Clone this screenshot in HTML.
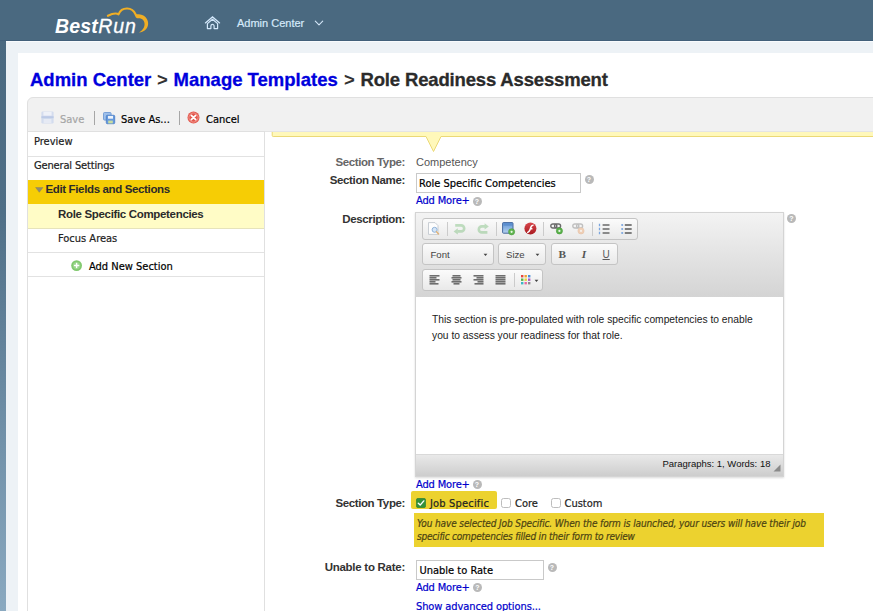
<!DOCTYPE html>
<html lang="en">
<head>
<meta charset="utf-8">
<title>Role Readiness Assessment - Manage Templates</title>
<style>
html,body{margin:0;padding:0;}
body{width:873px;height:611px;overflow:hidden;position:relative;background:#edf2f6;font-family:"Liberation Sans",Arial,sans-serif;}
.t{position:absolute;white-space:nowrap;height:20px;margin:0;padding:0;text-decoration:none;}
.abs{position:absolute;}
#header{left:0;top:0;width:873px;height:41px;background:#4a6980;box-sizing:border-box;border-bottom:1px solid #42607a;}
#hl{left:6px;top:41px;width:867px;height:1px;background:#f8fbfd;}
#leftstrip{left:0;top:41px;width:6px;height:570px;background:linear-gradient(#4a6980 0%,#4f6f87 30%,#7191a9 70%,#8aa9c0 100%);}
#page{left:18px;top:53px;width:855px;height:558px;background:#fff;}
#panel{left:27px;top:97px;width:860px;height:530px;background:#f1f1f1;border:1px solid #e0e0e0;border-radius:6px 0 0 0;box-sizing:border-box;}
#side{left:28px;top:131px;width:236px;height:480px;background:#fff;border-right:1px solid #e0e0e0;border-top:1px solid #e0e0e0;box-sizing:content-box;}
.row{position:absolute;left:0;width:236px;box-sizing:border-box;border-bottom:1px solid #e2e2e2;}
#main{left:265px;top:131px;width:608px;height:480px;background:#fff;border-top:1px solid #e4e4e4;box-sizing:border-box;}
.sep{position:absolute;width:1px;background:#a6a6a6;}
.inp{position:absolute;box-sizing:border-box;border:1px solid #c9c9c9;background:#fff;}
.help{position:absolute;width:9px;height:9px;border-radius:50%;background:#b9b9b9;color:#fff;font:700 7px/9px "Liberation Sans",sans-serif;text-align:center;}
.grp{position:absolute;box-sizing:border-box;border:1px solid #c4c4c4;border-radius:3px;background:linear-gradient(#fbfbfb,#e9e9e9);}
.cb{position:absolute;box-sizing:border-box;width:10px;height:10px;border:1px solid #bdbdbd;border-radius:2.5px;background:#fff;}
</style>
</head>
<body>

<div id="header" class="abs"></div>
<div id="leftstrip" class="abs"></div>
<div id="hl" class="abs"></div>
<span class="t" style="left:55px;top:16px;font:italic 700 19.5px/20px 'Liberation Sans', Arial, Helvetica, sans-serif;color:#fff;letter-spacing:0.15px;">Best</span>
<span class="t" style="left:98.2px;top:16px;font:italic 400 19.5px/20px 'Liberation Sans', Arial, Helvetica, sans-serif;color:#fff;letter-spacing:1.0px;-webkit-text-stroke:0.3px #fff;">Run</span>
<svg class="abs" style="left:100px;top:0px" width="56" height="40" viewBox="100 0 56 40">
<path d="M107.9 15.8 C110 14.7 113 13.5 115.6 13.5 C116.8 13.5 117.8 13.8 118.5 14.3 C120 10.6 123.5 8.4 127.2 8.5 C131 8.6 134 10.9 135.5 14.2 C135.9 15.1 136.3 16 136.7 16.7" fill="none" stroke="#f0ae24" stroke-width="2.1" stroke-linecap="round" stroke-linejoin="round"/>
<path d="M135.6 14.6 C138.6 13.6 142.8 14.3 145.4 16.9 C148.9 20.4 149 25.6 146.2 29 C144.3 31.3 141.6 32.4 138.9 32.5 C141.2 31 143 29.4 144 27.2 C145.2 24.4 144.6 21.4 142.6 19.6 C141 18.2 139 17.9 136.9 18.3 Z" fill="#f0ae24"/>
</svg>
<svg class="abs" style="left:204px;top:15px" width="17" height="16" viewBox="204 15 17 16">
<path d="M205.4 22.9 L212.5 16.9 L219.6 22.9" fill="none" stroke="#d3e8fb" stroke-width="1.25" stroke-linecap="round" stroke-linejoin="miter"/>
<path d="M207.4 23.6 L212.5 19.3 L217.6 23.6 V28.6 H214.1 V26 A1.6 1.6 0 0 0 210.9 26 V28.6 H207.4 Z" fill="none" stroke="#d3e8fb" stroke-width="1.2" stroke-linejoin="round"/>
</svg>
<span class="t" style="left:237px;top:13px;font:normal 400 11px/20px 'Liberation Sans', Arial, Helvetica, sans-serif;color:#d6e9fa;-webkit-text-stroke:0.2px #d6e9fa;">Admin Center</span>
<svg class="abs" style="left:314px;top:19px" width="10" height="8" viewBox="0 0 10 8"><path d="M1.3 2.2 L5 5.8 L8.7 2.2" fill="none" stroke="#d3e6f7" stroke-width="1.1" stroke-linecap="round" stroke-linejoin="round"/></svg>
<div id="page" class="abs"></div>
<a class="t" style="left:30px;top:70px;font:normal 700 18.5px/20px 'Liberation Sans', Arial, Helvetica, sans-serif;color:#0000dd;-webkit-text-stroke:0.3px #0000dd;">Admin Center</a>
<span class="t" style="left:157px;top:70px;font:normal 700 18.5px/20px 'Liberation Sans', Arial, Helvetica, sans-serif;color:#333;">&gt;</span>
<a class="t" style="left:173.6px;top:70px;font:normal 700 18.5px/20px 'Liberation Sans', Arial, Helvetica, sans-serif;color:#0000dd;-webkit-text-stroke:0.3px #0000dd;">Manage Templates</a>
<span class="t" style="left:344px;top:70px;font:normal 700 18.5px/20px 'Liberation Sans', Arial, Helvetica, sans-serif;color:#333;">&gt;</span>
<span class="t" style="left:360.5px;top:70px;font:normal 700 18.5px/20px 'Liberation Sans', Arial, Helvetica, sans-serif;color:#2b2b2b;letter-spacing:-0.16px;-webkit-text-stroke:0.3px #2b2b2b;">Role Readiness Assessment</span>
<div id="panel" class="abs"></div>
<svg class="abs" style="left:41px;top:111px" width="13" height="13" viewBox="0 0 13 13">
<rect x="0.4" y="0.4" width="12.2" height="12.2" rx="1.3" fill="#d3dcee"/>
<rect x="2.4" y="0.8" width="8.2" height="3.8" fill="#eef1f8"/>
<rect x="0.4" y="5.2" width="12.2" height="2" fill="#bccae6"/>
<rect x="2.6" y="8" width="7.8" height="4" fill="#e6eaf4"/>
</svg>
<span class="t" style="left:60px;top:110px;font:normal 400 11px/20px 'DejaVu Sans Condensed', 'Liberation Sans', sans-serif;color:#a6a6a6;-webkit-text-stroke:0.2px currentColor;">Save</span>
<div class="sep" style="left:94px;top:111px;height:14px"></div>
<svg class="abs" style="left:102.5px;top:111.5px" width="13" height="13" viewBox="0 0 13 13">
<rect x="0.5" y="0.5" width="7.6" height="7.6" rx="1" fill="#9fc0ea" stroke="#6f9bd6" stroke-width=".9"/>
<rect x="3.3" y="3.3" width="8.4" height="8.4" rx="1" fill="#6699dd" stroke="#4f82c8" stroke-width=".9"/>
<rect x="5" y="3.9" width="5" height="2.8" fill="#eef4fc"/>
<rect x="5.2" y="8.6" width="4.6" height="2.8" fill="#c9dca2"/>
</svg>
<span class="t" style="left:121px;top:110px;font:normal 400 11px/20px 'DejaVu Sans Condensed', 'Liberation Sans', sans-serif;color:#000;-webkit-text-stroke:0.2px currentColor;">Save As...</span>
<div class="sep" style="left:179px;top:111px;height:14px"></div>
<svg class="abs" style="left:187px;top:111px" width="13" height="13" viewBox="0 0 13 13">
<circle cx="6.5" cy="6.5" r="6" fill="#e2574d"/>
<circle cx="6.5" cy="6.5" r="4.6" fill="none" stroke="#f4a49c" stroke-width=".8"/>
<path d="M4.3 4.3 L8.7 8.7 M8.7 4.3 L4.3 8.7" stroke="#fff" stroke-width="1.7" stroke-linecap="round"/>
</svg>
<span class="t" style="left:206px;top:110px;font:normal 400 11px/20px 'DejaVu Sans Condensed', 'Liberation Sans', sans-serif;color:#000;-webkit-text-stroke:0.2px currentColor;">Cancel</span>
<div id="side" class="abs">
<div class="row" style="top:0;height:25px"></div>
<div class="row" style="top:25px;height:23px;border-bottom:none"></div>
<div class="row" style="top:48px;height:24px;background:#f6cd05;border-bottom:none"></div>
<div class="row" style="top:72px;height:25px;background:#fffcc6;border-bottom-color:#e6e3bb"></div>
<div class="row" style="top:97px;height:24px"></div>
<div class="row" style="top:121px;height:24px"></div>
</div>
<span class="t" style="left:34px;top:132px;font:normal 400 11px/20px 'DejaVu Sans Condensed', 'Liberation Sans', sans-serif;color:#222;-webkit-text-stroke:0.2px currentColor;">Preview</span>
<span class="t" style="left:34px;top:156px;font:normal 400 11px/20px 'DejaVu Sans Condensed', 'Liberation Sans', sans-serif;color:#222;letter-spacing:-0.15px;-webkit-text-stroke:0.2px currentColor;">General Settings</span>
<svg class="abs" style="left:34.5px;top:187px" width="9" height="6" viewBox="0 0 9 6"><path d="M0.6 0.4 H8 L4.3 5.3 Z" fill="#8f8b72" stroke="#7d7a66" stroke-width=".4"/></svg>
<span class="t" style="left:45.5px;top:179px;font:normal 700 11.5px/20px 'Liberation Sans', Arial, Helvetica, sans-serif;color:#2b2b2b;letter-spacing:-0.36px;">Edit Fields and Sections</span>
<span class="t" style="left:58px;top:204px;font:normal 700 11.5px/20px 'Liberation Sans', Arial, Helvetica, sans-serif;color:#2b2b2b;letter-spacing:-0.33px;">Role Specific Competencies</span>
<span class="t" style="left:58px;top:229px;font:normal 400 11px/20px 'DejaVu Sans Condensed', 'Liberation Sans', sans-serif;color:#222;-webkit-text-stroke:0.2px currentColor;">Focus Areas</span>
<svg class="abs" style="left:71px;top:260px" width="12" height="12" viewBox="0 0 12 12">
<circle cx="5.6" cy="5.6" r="5.4" fill="#80c96e"/>
<circle cx="5.6" cy="5.6" r="3.7" fill="#9bd68c"/>
<path d="M5.6 3.6 V7.6 M3.6 5.6 H7.6" stroke="#fff" stroke-width="1.5" stroke-linecap="round"/>
</svg>
<span class="t" style="left:89px;top:257px;font:normal 400 11px/20px 'DejaVu Sans Condensed', 'Liberation Sans', sans-serif;color:#000;-webkit-text-stroke:0.2px currentColor;">Add New Section</span>
<div id="main" class="abs"></div>
<svg class="abs" style="left:266px;top:132px" width="607" height="24" viewBox="0 0 607 24">
<path d="M6 -1 V3.5 Q6 4.5 7 4.5 H160 L167.5 19.5 L175 4.5 H607 V-1 Z" fill="#fff8ba"/>
<path d="M6.2 0 V3.5 Q6.2 4.5 7.2 4.5 H160 L167.5 19.5 L175 4.5 H607" fill="none" stroke="#ebd976" stroke-width="1"/>
</svg>
<span class="t" style="right:468px;top:152px;font:normal 700 11.5px/20px 'Liberation Sans', Arial, Helvetica, sans-serif;color:#666;letter-spacing:-0.38px;">Section Type:</span>
<span class="t" style="left:416px;top:152px;font:normal 400 11px/20px 'Liberation Sans', Arial, Helvetica, sans-serif;color:#555;">Competency</span>
<span class="t" style="right:468px;top:170px;font:normal 700 11.5px/20px 'Liberation Sans', Arial, Helvetica, sans-serif;color:#333;letter-spacing:-0.35px;">Section Name:</span>
<div class="inp" style="left:416px;top:173px;width:165px;height:20px"></div>
<span class="t" style="left:419px;top:174px;font:normal 400 11px/20px 'DejaVu Sans Condensed', 'Liberation Sans', sans-serif;color:#000;-webkit-text-stroke:0.2px currentColor;">Role Specific Competencies</span>
<div class="help" style="left:584.5px;top:175px">?</div>
<a class="t" style="left:416px;top:191px;font:normal 400 11px/20px 'DejaVu Sans Condensed', 'Liberation Sans', sans-serif;color:#0000cc;letter-spacing:-0.15px;-webkit-text-stroke:0.2px currentColor;">Add More+</a>
<div class="help" style="left:472.5px;top:196.5px">?</div>
<span class="t" style="right:468px;top:209px;font:normal 700 11.5px/20px 'Liberation Sans', Arial, Helvetica, sans-serif;color:#333;letter-spacing:-0.37px;">Description:</span>
<div class="abs" style="left:415px;top:212px;width:369px;height:265px;box-sizing:border-box;border:1px solid #d4d4d4;background:#fff;box-shadow:0 1px 2px rgba(0,0,0,.15)"></div>
<div class="abs" style="left:416px;top:213px;width:367px;height:84px;background:linear-gradient(#f3f3f3,#d4d4d4)"></div>
<div class="abs" style="left:416px;top:454px;width:367px;height:22px;background:linear-gradient(#e9e9e9,#cdcdcd);border-top:1px solid #d9d9d9;box-sizing:border-box"></div>
<div class="help" style="left:787px;top:214px">?</div>
<div class="grp" style="left:422px;top:218px;width:216px;height:22px"></div>
<div class="grp" style="left:422px;top:243px;width:72px;height:22px"></div>
<div class="grp" style="left:498px;top:243px;width:48px;height:22px"></div>
<div class="grp" style="left:551px;top:243px;width:67px;height:22px"></div>
<div class="grp" style="left:422px;top:269px;width:121px;height:22px"></div>
<svg class="abs" style="left:427px;top:222px" width="14" height="14" viewBox="0 0 14 14">
<path d="M1.5 0.6 H8 L11 3.6 V12.4 H1.5 Z" fill="#fdfdfd" stroke="#c3c8cf" stroke-width=".9"/>
<circle cx="7.6" cy="7.8" r="2.5" fill="#d6e6f6" stroke="#8fb2d9" stroke-width="1"/>
<path d="M9.5 9.8 L11.6 12" stroke="#e0b277" stroke-width="1.4" stroke-linecap="round"/>
</svg>
<div class="sep" style="left:446.5px;top:222px;height:14px;background:#cbcbcb"></div>
<div class="sep" style="left:495.5px;top:222px;height:14px;background:#cbcbcb"></div>
<div class="sep" style="left:543px;top:222px;height:14px;background:#cbcbcb"></div>
<div class="sep" style="left:591.5px;top:222px;height:14px;background:#cbcbcb"></div>
<svg class="abs" style="left:453px;top:223px;opacity:.34" width="14" height="12" viewBox="0 0 14 12">
<path d="M2.2 2.4 H8.2 A3 3 0 0 1 8.2 8.4 H4.4" fill="none" stroke="#57ae57" stroke-width="2.6"/><path d="M0.6 8.4 L4.8 5.2 V11.6 Z" fill="#57ae57"/></svg>
<svg class="abs" style="left:476px;top:223px;opacity:.34" width="14" height="12" viewBox="0 0 14 12">
<path d="M9 3.4 H5.8 A3 3 0 0 0 5.8 9.4 H11.4" fill="none" stroke="#57ae57" stroke-width="2.6"/><path d="M12.8 3.4 L8.6 0.2 V6.6 Z" fill="#57ae57"/></svg>
<svg class="abs" style="left:502px;top:222px" width="14" height="14" viewBox="0 0 14 14">
<defs><linearGradient id="imgg" x1="0" y1="0" x2="0" y2="1"><stop offset="0" stop-color="#5d93d6"/><stop offset="1" stop-color="#b7d2ee"/></linearGradient></defs>
<rect x="0.6" y="0.6" width="10.4" height="10.6" rx="0.8" fill="url(#imgg)" stroke="#46699f" stroke-width="1"/>
<rect x="1.6" y="1.6" width="8.4" height="2.2" fill="#4f82c4" opacity=".55"/>
<circle cx="9.6" cy="9.8" r="3.1" fill="#62b552" stroke="#4a9a3c" stroke-width=".6"/>
<circle cx="9.6" cy="9.8" r="1.1" fill="#eaf7e6"/>
</svg>
<svg class="abs" style="left:524px;top:222px" width="13" height="13" viewBox="0 0 13 13">
<defs><linearGradient id="flg" x1="0" y1="0" x2="0" y2="1"><stop offset="0" stop-color="#d8474c"/><stop offset="1" stop-color="#a91b21"/></linearGradient></defs>
<circle cx="6.4" cy="6.4" r="6" fill="url(#flg)"/>
<path d="M9.6 2.6 C6.4 2.8 6.3 5 5.6 6.8 C5 8.4 4.4 9.6 3 9.9 V11 C5.6 10.8 6.3 9 6.9 7.4 H8.4 V6.1 H7.4 C7.9 4.8 8.3 3.9 9.6 3.8 Z" fill="#fff"/>
</svg>
<svg class="abs" style="left:549.5px;top:223px" width="14" height="13" viewBox="0 0 14 13">
<rect x="0.8" y="1" width="6" height="4" rx="2" fill="none" stroke="#6a6a6a" stroke-width="1.4"/>
<rect x="4.6" y="1" width="6" height="4" rx="2" fill="none" stroke="#6a6a6a" stroke-width="1.4"/>
<circle cx="9.4" cy="7.9" r="3.1" fill="#5bb24c" stroke="#469a39" stroke-width=".6"/>
<circle cx="9.4" cy="7.9" r="1.1" fill="#eaf7e6"/>
</svg>
<svg class="abs" style="left:572px;top:223px;opacity:.38" width="14" height="13" viewBox="0 0 14 13">
<rect x="0.8" y="1" width="6" height="4" rx="2" fill="none" stroke="#6a6a6a" stroke-width="1.4"/>
<rect x="4.6" y="1" width="6" height="4" rx="2" fill="none" stroke="#6a6a6a" stroke-width="1.4"/>
<circle cx="9" cy="7.9" r="3.1" fill="#ee9a5a" stroke="#d9803e" stroke-width=".6"/>
<circle cx="9" cy="7.9" r="1.1" fill="#fdf0e6"/>
</svg>
<svg class="abs" style="left:598px;top:223px" width="12" height="12" viewBox="0 0 12 12">
<path d="M4.6 2 H11.5 M4.6 6 H11.5 M4.6 10 H11.5" stroke="#6a6a6a" stroke-width="1.5"/>
<path d="M1.5 0.8 V3.2 M1.5 4.8 V7.2 M1.5 8.8 V11.2" stroke="#7ba6df" stroke-width="1.3"/>
</svg>
<svg class="abs" style="left:620px;top:223px" width="12" height="12" viewBox="0 0 12 12">
<path d="M4.8 2 H11.7 M4.8 6 H11.7 M4.8 10 H11.7" stroke="#5a5a5a" stroke-width="1.5"/>
<circle cx="2.2" cy="2" r="1.1" fill="#7ba6df"/><circle cx="2.2" cy="6" r="1.1" fill="#7ba6df"/><circle cx="2.2" cy="10" r="1.1" fill="#7ba6df"/>
</svg>
<span class="t" style="left:430.5px;top:245px;font:normal 400 9.6px/20px 'Liberation Sans', Arial, Helvetica, sans-serif;color:#444;">Font</span>
<svg class="abs" style="left:483px;top:253px" width="5" height="4" viewBox="0 0 5 4"><path d="M0.6 0.8 H4.4 L2.5 3 Z" fill="#444"/></svg>
<span class="t" style="left:506px;top:245px;font:normal 400 9.6px/20px 'Liberation Sans', Arial, Helvetica, sans-serif;color:#444;">Size</span>
<svg class="abs" style="left:535px;top:253px" width="5" height="4" viewBox="0 0 5 4"><path d="M0.6 0.8 H4.4 L2.5 3 Z" fill="#444"/></svg>
<span class="t" style="left:558.5px;top:244px;font:normal 700 11.3px/20px 'Liberation Serif', serif;color:#555;">B</span>
<span class="t" style="left:581.8px;top:244px;font:italic 700 11.3px/20px 'Liberation Serif', serif;color:#555;">I</span>
<span class="t" style="left:602.5px;top:245px;font:normal 400 10px/20px 'Liberation Sans', Arial, Helvetica, sans-serif;color:#5a5a5a;text-decoration:underline;">U</span>
<svg class="abs" style="left:428.5px;top:275px" width="11" height="10" viewBox="0 0 11 10"><rect x="0.5" y="0" width="10" height="1.6" fill="#6e6e6e"/><rect x="0.5" y="2" width="7" height="1.6" fill="#6e6e6e"/><rect x="0.5" y="4" width="10" height="1.6" fill="#6e6e6e"/><rect x="0.5" y="6" width="6" height="1.6" fill="#6e6e6e"/><rect x="0.5" y="8" width="9" height="1.6" fill="#6e6e6e"/></svg>
<svg class="abs" style="left:451px;top:275px" width="11" height="10" viewBox="0 0 11 10"><rect x="1.5" y="0" width="8" height="1.6" fill="#6e6e6e"/><rect x="0.5" y="2" width="10" height="1.6" fill="#6e6e6e"/><rect x="1.5" y="4" width="8" height="1.6" fill="#6e6e6e"/><rect x="0.5" y="6" width="10" height="1.6" fill="#6e6e6e"/><rect x="2.5" y="8" width="6" height="1.6" fill="#6e6e6e"/></svg>
<svg class="abs" style="left:473px;top:275px" width="11" height="10" viewBox="0 0 11 10"><rect x="0.5" y="0" width="10" height="1.6" fill="#6e6e6e"/><rect x="3.5" y="2" width="7" height="1.6" fill="#6e6e6e"/><rect x="0.5" y="4" width="10" height="1.6" fill="#6e6e6e"/><rect x="4.5" y="6" width="6" height="1.6" fill="#6e6e6e"/><rect x="1.5" y="8" width="9" height="1.6" fill="#6e6e6e"/></svg>
<svg class="abs" style="left:495px;top:275px" width="11" height="10" viewBox="0 0 11 10"><rect x="0.5" y="0" width="10" height="1.6" fill="#6e6e6e"/><rect x="0.5" y="2" width="10" height="1.6" fill="#6e6e6e"/><rect x="0.5" y="4" width="10" height="1.6" fill="#6e6e6e"/><rect x="0.5" y="6" width="10" height="1.6" fill="#6e6e6e"/><rect x="0.5" y="8" width="10" height="1.6" fill="#6e6e6e"/></svg>
<div class="sep" style="left:514px;top:273px;height:14px;background:#cbcbcb"></div>
<svg class="abs" style="left:521px;top:275px" width="10" height="10" viewBox="0 0 10 10"><rect x="0.0" y="0.0" width="2.4" height="2.4" fill="#e4443c"/><rect x="3.5" y="0.0" width="2.4" height="2.4" fill="#f0a030"/><rect x="7.0" y="0.0" width="2.4" height="2.4" fill="#4a90d9"/><rect x="0.0" y="3.5" width="2.4" height="2.4" fill="#58b04a"/><rect x="3.5" y="3.5" width="2.4" height="2.4" fill="#e8d33a"/><rect x="7.0" y="3.5" width="2.4" height="2.4" fill="#b05ac0"/><rect x="0.0" y="7.0" width="2.4" height="2.4" fill="#3bb7c4"/><rect x="3.5" y="7.0" width="2.4" height="2.4" fill="#e86aa0"/><rect x="7.0" y="7.0" width="2.4" height="2.4" fill="#8a8a8a"/></svg>
<svg class="abs" style="left:533.5px;top:279px" width="5" height="4" viewBox="0 0 5 4"><path d="M0.6 0.8 H4.4 L2.5 3 Z" fill="#444"/></svg>
<span class="t" style="left:432px;top:310px;font:normal 400 10.27px/20px 'Liberation Sans', Arial, Helvetica, sans-serif;color:#222;">This section is pre-populated with role specific competencies to enable</span>
<span class="t" style="left:432px;top:326px;font:normal 400 10.27px/20px 'Liberation Sans', Arial, Helvetica, sans-serif;color:#222;">you to assess your readiness for that role.</span>
<span class="t" style="left:662.4px;top:454px;font:normal 400 9.5px/20px 'Liberation Sans', Arial, Helvetica, sans-serif;color:#111;">Paragraphs: 1, Words: 18</span>
<svg class="abs" style="left:773px;top:464px" width="8" height="8" viewBox="0 0 8 8"><path d="M7.5 0.5 V7.5 H0.5 Z" fill="#8a8a8a"/></svg>
<a class="t" style="left:416px;top:475px;font:normal 400 11px/20px 'DejaVu Sans Condensed', 'Liberation Sans', sans-serif;color:#0000cc;letter-spacing:-0.15px;-webkit-text-stroke:0.2px currentColor;">Add More+</a>
<div class="help" style="left:472.5px;top:479.5px">?</div>
<span class="t" style="right:468px;top:493px;font:normal 700 11.5px/20px 'Liberation Sans', Arial, Helvetica, sans-serif;color:#333;letter-spacing:-0.38px;">Section Type:</span>
<div class="abs" style="left:411px;top:491px;width:86px;height:18px;background:#ecd22f;border-radius:2px"></div>
<svg class="abs" style="left:416px;top:498px" width="10" height="10" viewBox="0 0 10 10">
<rect x="0.3" y="0.3" width="9.4" height="9.4" rx="2" fill="#33913b" stroke="#2a7a31" stroke-width=".6"/>
<path d="M2.3 5.2 L4.2 7.1 L7.8 2.9" fill="none" stroke="#fff" stroke-width="1.4" stroke-linecap="round" stroke-linejoin="round"/>
</svg>
<span class="t" style="left:430px;top:494px;font:normal 400 11px/20px 'DejaVu Sans Condensed', 'Liberation Sans', sans-serif;color:#222;letter-spacing:0.18px;-webkit-text-stroke:0.2px currentColor;">Job Specific</span>
<div class="cb" style="left:501px;top:498px"></div>
<span class="t" style="left:515px;top:494px;font:normal 400 11px/20px 'DejaVu Sans Condensed', 'Liberation Sans', sans-serif;color:#222;-webkit-text-stroke:0.2px currentColor;">Core</span>
<div class="cb" style="left:550.5px;top:498px"></div>
<span class="t" style="left:564.5px;top:494px;font:normal 400 11px/20px 'DejaVu Sans Condensed', 'Liberation Sans', sans-serif;color:#222;-webkit-text-stroke:0.2px currentColor;">Custom</span>
<div class="abs" style="left:413.5px;top:512.5px;width:410px;height:34px;background:#ecd22f"></div>
<span class="t" style="left:417px;top:514px;font:italic 400 10px/20px 'DejaVu Sans Condensed', 'Liberation Sans', sans-serif;color:#4d4412;letter-spacing:-0.12px;-webkit-text-stroke:0.2px #4d4412;">You have selected Job Specific. When the form is launched, your users will have their job</span>
<span class="t" style="left:417px;top:527px;font:italic 400 10px/20px 'DejaVu Sans Condensed', 'Liberation Sans', sans-serif;color:#4d4412;letter-spacing:-0.2px;-webkit-text-stroke:0.2px #4d4412;">specific competencies filled in their form to review</span>
<span class="t" style="right:468px;top:557px;font:normal 700 11.5px/20px 'Liberation Sans', Arial, Helvetica, sans-serif;color:#333;letter-spacing:-0.27px;">Unable to Rate:</span>
<div class="inp" style="left:416px;top:560px;width:128px;height:20px"></div>
<span class="t" style="left:419.5px;top:561px;font:normal 400 11px/20px 'DejaVu Sans Condensed', 'Liberation Sans', sans-serif;color:#000;-webkit-text-stroke:0.2px currentColor;">Unable to Rate</span>
<div class="help" style="left:547.5px;top:562.5px">?</div>
<a class="t" style="left:416px;top:578px;font:normal 400 11px/20px 'DejaVu Sans Condensed', 'Liberation Sans', sans-serif;color:#0000cc;letter-spacing:-0.15px;-webkit-text-stroke:0.2px currentColor;">Add More+</a>
<div class="help" style="left:473px;top:583px">?</div>
<a class="t" style="left:416px;top:597px;font:normal 400 11px/20px 'DejaVu Sans Condensed', 'Liberation Sans', sans-serif;color:#0000cc;letter-spacing:-0.1px;-webkit-text-stroke:0.2px currentColor;">Show advanced options...</a>
</body>
</html>
